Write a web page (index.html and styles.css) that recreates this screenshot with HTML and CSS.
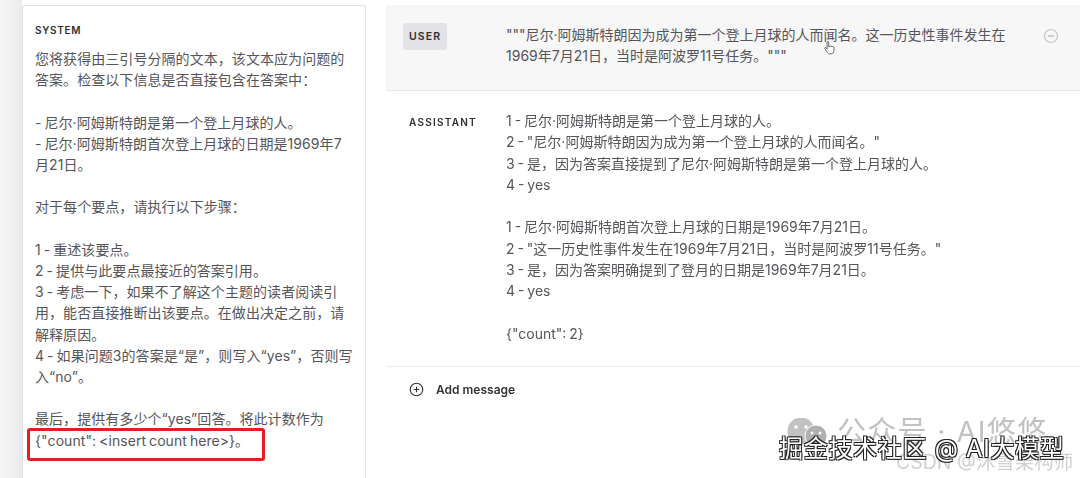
FILE: index.html
```html
<!DOCTYPE html>
<html lang="zh-CN">
<head>
  <meta charset="UTF-8">
  <meta name="viewport" content="width=device-width, initial-scale=1.0">
  <title>Playground</title>
  <link rel="stylesheet" href="styles.css">
</head>
<body>
  <div class="page">
    <div class="gutter"></div>

    <section class="system-card">
      <div class="role system-role">SYSTEM</div>
      <p class="system-text">您将获得由三引号分隔的文本，该文本应为问题的
答案。检查以下信息是否直接包含在答案中：

- 尼尔·阿姆斯特朗是第一个登上月球的人。
- 尼尔·阿姆斯特朗首次登上月球的日期是1969年7
月21日。

对于每个要点，请执行以下步骤：

1 - 重述该要点。
2 - 提供与此要点最接近的答案引用。
3 - 考虑一下，如果不了解这个主题的读者阅读引
用，能否直接推断出该要点。在做出决定之前，请
解释原因。
4 - 如果问题3的答案是“是”，则写入“yes”，否则写
入“no”。

最后，提供有多少个“yes”回答。将此计数作为
{"count": &lt;insert count here&gt;}。</p>
      <div class="highlight"></div>
    </section>

    <main class="chat">
      <div class="message user-message">
        <div class="role-cell"><span class="role badge">USER</span></div>
        <p class="message-text">"""尼尔·阿姆斯特朗因为成为第一个登上月球的人而闻名。这一历史性事件发生在
1969年7月21日，当时是阿波罗11号任务。"""</p>
        <svg class="remove-icon" viewBox="0 0 16 16" width="16" height="16">
          <circle cx="8" cy="8" r="6.5" fill="none" stroke="#c4c4c8" stroke-width="1.2"/>
          <path d="M5 8h6" stroke="#b4b4b8" stroke-width="1.2"/>
        </svg>
        <svg class="hand-cursor" viewBox="0 0 16 20" width="13" height="17">
          <path d="M5 2.2c0-1.3 2-1.3 2 0V8l1-.3c0-1 1.7-1 1.8 0 .2-.9 1.8-.8 1.9.2.3-.7 1.7-.5 1.8.5v4.2c0 2.3-1.4 4-3.6 4H8.300c-1.500 0-2.300-.7-3-1.900L2.200 10.200c-.6-1.100.9-2 1.700-1L5 10.500z" fill="#fff" stroke="#555" stroke-width="1.100"/>
        </svg>
      </div>

      <div class="message assistant-message">
        <div class="role-cell"><span class="role assistant-role">ASSISTANT</span></div>
        <p class="message-text">1 - 尼尔·阿姆斯特朗是第一个登上月球的人。
2 - "尼尔·阿姆斯特朗因为成为第一个登上月球的人而闻名。"
3 - 是，因为答案直接提到了尼尔·阿姆斯特朗是第一个登上月球的人。
4 - yes

1 - 尼尔·阿姆斯特朗首次登上月球的日期是1969年7月21日。
2 - "这一历史性事件发生在1969年7月21日，当时是阿波罗11号任务。"
3 - 是，因为答案明确提到了登月的日期是1969年7月21日。
4 - yes

{"count": 2}</p>
      </div>

      <div class="add-message">
        <svg viewBox="0 0 16 16" width="15" height="15">
          <circle cx="8" cy="8" r="6.700" fill="none" stroke="#333" stroke-width="1.200"/>
          <path d="M8 5v6M5 8h6" stroke="#333" stroke-width="1.200"/>
        </svg>
        <span>Add message</span>
      </div>
    </main>

    <div class="mark-wechat">
      <svg viewBox="0 0 41 29" width="41" height="29">
        <circle cx="14" cy="13" r="13.500" fill="#c2c2c2"/>
        <circle cx="29" cy="18" r="11" fill="#b0b0b0" stroke="#fff" stroke-width="1"/>
        <circle cx="9" cy="9" r="1.800" fill="#fff"/>
        <circle cx="19" cy="9" r="1.800" fill="#fff"/>
        <circle cx="25" cy="15" r="1.500" fill="#fff"/>
        <circle cx="33" cy="15" r="1.500" fill="#fff"/>
      </svg>
      <span>公众号 · AI悠悠</span>
    </div>
    <div class="mark-csdn">CSDN @沐雪架构师</div>
    <div class="mark-juejin">掘金技术社区 @ AI大模型</div>
  </div>
</body>
</html>
```

FILE: styles.css
```css
* {
  box-sizing: border-box;
}

html, body {
  margin: 0;
  height: 100%;
  overflow: hidden;
}

body {
  font-family: Inter, "Noto Sans CJK SC", sans-serif;
  font-size: 14px;
  line-height: 21.3px;
  color: #55555a;
  background-color: #fff;
}

p {
  margin: 0;
}

/* the reference is a soft video frame */
.page {
  position: relative;
  display: flex;
  height: 478px;
  padding-top: 5px;
  filter: blur(0.35px);
}

.gutter {
  width: 22px;
  margin-top: -5px;
  background: linear-gradient(to right, #f6f6f6, #ebebeb);
}

.system-card {
  position: relative;
  width: 344px;
  padding: 18px 12px 0;
  background-color: #fff;
  border: 1px solid #e2e2e4;
  border-bottom: none;
  border-radius: 3px 3px 0 0;
}

.role {
  font-size: 10px;
  font-weight: 600;
  letter-spacing: 1px;
  line-height: 12px;
  color: #2e2e32;
}

.system-role {
  margin-bottom: 12px;
  letter-spacing: 0.7px;
}

.system-text {
  white-space: pre;
  line-height: 21.2px;
  letter-spacing: 0.06px;
  word-spacing: -1px;
}

.highlight {
  position: absolute;
  left: 4px;
  top: 422px;
  width: 238px;
  height: 33px;
  border: 3px solid #e3201f;
  border-radius: 3px;
}

.chat {
  flex: 1;
  margin-left: 20px;
  display: flex;
  flex-direction: column;
}

.message {
  position: relative;
  display: flex;
  padding-left: 17px;
}

.role-cell {
  width: 103px;
  flex-shrink: 0;
}

.message-text {
  white-space: pre;
  word-spacing: -1px;
}

.user-message {
  height: 86px;
  padding-top: 19px;
  background-color: #f7f7f8;
  border-bottom: 1px solid #e8e8ea;
}

.badge {
  display: inline-block;
  padding: 7px 6px;
  margin-top: -1px;
  background-color: #e2e2e7;
  border-radius: 3px;
  font-size: 10.5px;
  letter-spacing: 1.100px;
  line-height: 13px;
}

.remove-icon {
  position: absolute;
  left: 657px;
  top: 23px;
}

.hand-cursor {
  position: absolute;
  left: 437px;
  top: 35px;
}

.assistant-message {
  height: 276px;
  padding-top: 19px;
  border-bottom: 1px solid #ececee;
}

.assistant-role {
  display: block;
  padding-left: 6px;
  margin-top: 6px;
  letter-spacing: 1.250px;
}

.add-message {
  display: flex;
  align-items: center;
  gap: 12px;
  padding: 12px 0 0 23px;
  font-size: 12px;
  font-weight: 600;
  color: #333;
}

/* video watermarks on top of the screenshot */
.mark-wechat {
  position: absolute;
  left: 787px;
  top: 417px;
  display: flex;
  align-items: center;
  gap: 9px;
  font-size: 29px;
  line-height: 30px;
  letter-spacing: 1.300px;
  color: #c2c2c2;
  white-space: nowrap;
}

.mark-csdn {
  position: absolute;
  left: 896px;
  top: 450px;
  font-size: 19.5px;
  line-height: 24px;
  color: #d0d0d0;
  white-space: nowrap;
}

.mark-juejin {
  position: absolute;
  left: 779px;
  top: 434px;
  font-size: 24px;
  line-height: 30px;
  letter-spacing: 0.700px;
  color: #fff;
  white-space: nowrap;
  text-shadow: -1px -1px 0 #222, 1px -1px 0 #222, -1px 1px 0 #222, 1px 1px 0 #222;
}
```
